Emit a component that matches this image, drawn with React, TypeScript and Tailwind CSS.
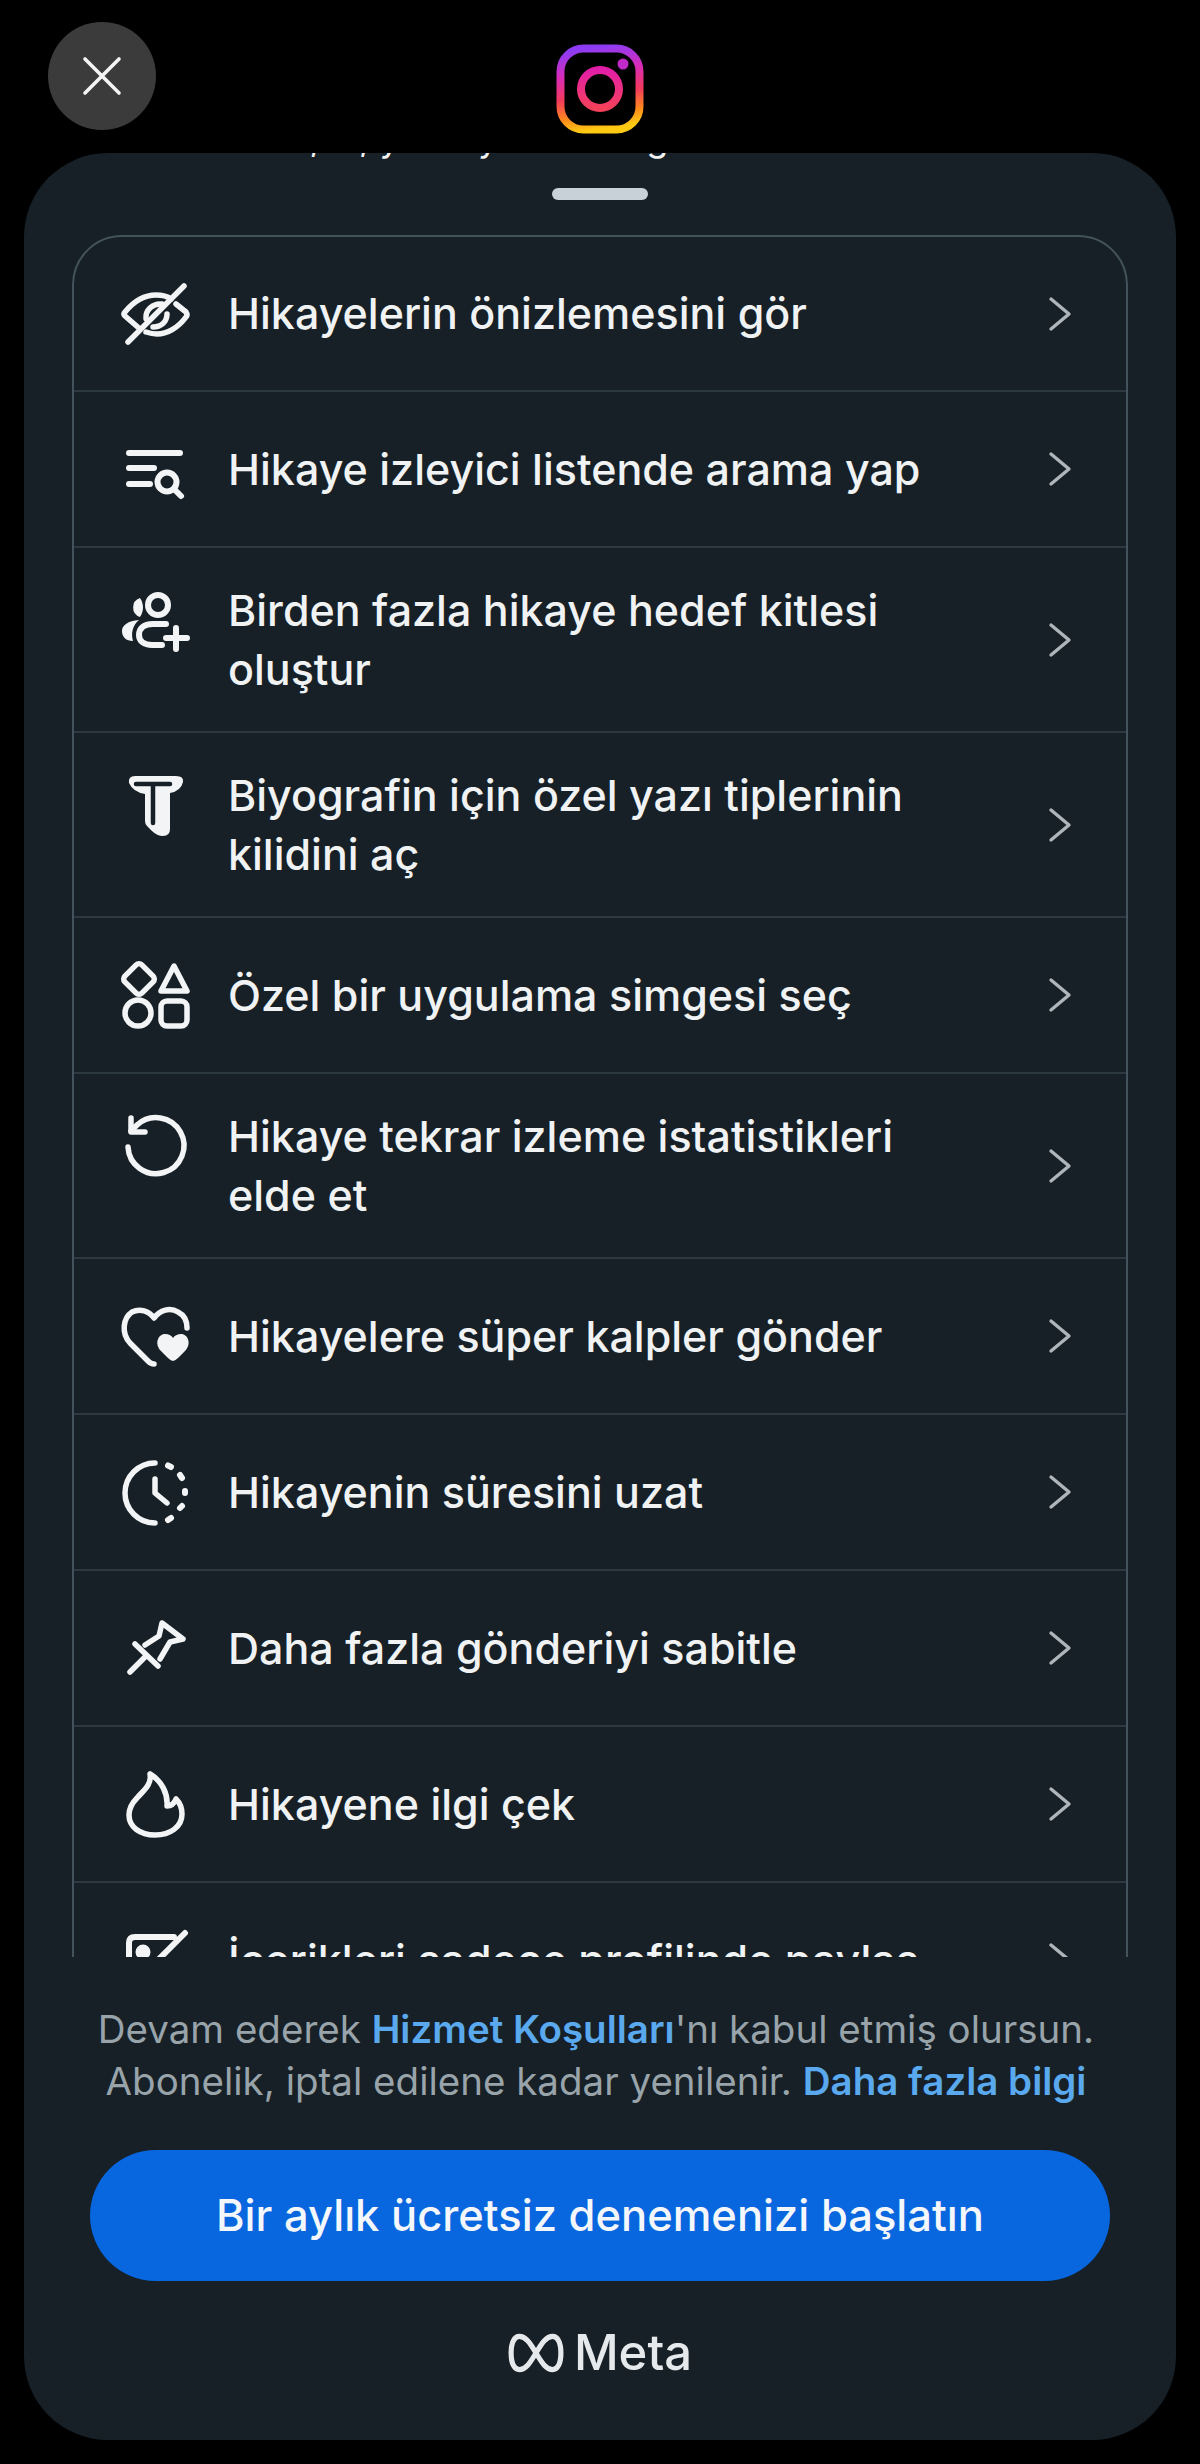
import React from "react";

// Icons are all drawn in a 72x72 box, measured off the reference
const s = {
  fill: "none",
  stroke: "#f2f4f5",
  strokeWidth: 5.5,
  strokeLinecap: "round" as const,
  strokeLinejoin: "round" as const,
};

function Box({ children }: { children: React.ReactNode }) {
  return (
    <svg viewBox="0 0 72 72" className="w-[72px] h-[72px] shrink-0">
      {children}
    </svg>
  );
}

const EyeIcon = () => (
  <Box>
    <g {...s}>
      <path d="M20 51 L5 38 Q3 36 5 34 C14 23 25 17 36 17 C42 17 47 18 51 21" />
      <path d="M56 26 L66 34 Q68 37 66 39 C58 50 47 56 37 56 C33 56 29 55 26 54" />
      <path d="M26 41 C25 32 33 25 42 26" />
      <path d="M47 36 C47 44 41 49 33 49" />
      <path d="M8 64 L64 8" />
    </g>
  </Box>
);

const ListSearchIcon = () => (
  <Box>
    <g {...s} strokeWidth={6}>
      <path d="M9 20 H60" />
      <path d="M9 35 H34" />
      <path d="M9 51 H30" />
      <circle cx="47" cy="49" r="9.5" />
      <path d="M55 57 L61 63" />
    </g>
  </Box>
);

const GroupAddIcon = () => (
  <Box>
    <g {...s} strokeWidth={6}>
      <circle cx="38" cy="22" r="10" />
      <path d="M46 41 H33 C23 41 19 46 19 52 C19 58 24 62 32 62 H42" />
      <path d="M56 45 V66 M46 55 H67" />
    </g>
    <path d="M20 15 A10 10 0 0 0 20 34 C24 28 24 21 20 15 Z" fill="#f2f4f5" />
    <path d="M19 37 C8 38 2 42 2 48 C2 54 6 58 13 58 C11 51 12 43 19 37 Z" fill="#f2f4f5" />
  </Box>
);

const FontIcon = () => (
  <Box>
    <path
      d="M15 8 H56 Q64 8 63 14 Q61 23 50 25 V61 Q50 68 43 68 Q37 68 32 63 L27 58 Q25 56 25 53 V26 Q13 24 9 15 Q8 8 15 8 Z"
      fill="#f2f4f5"
    />
    <path d="M16 16 H50 M33 16 V55" fill="none" stroke="#162026" strokeWidth={4.5} strokeLinecap="round" />
  </Box>
);

const ShapesIcon = () => (
  <Box>
    <g {...s}>
      <rect x="7" y="8" width="24" height="24" rx="4" transform="rotate(45 19 20)" />
      <path d="M54 7 L67 32 H41 Z" />
      <circle cx="18" cy="54" r="13" />
      <rect x="41" y="42" width="26" height="25" rx="6" />
    </g>
  </Box>
);

const ReplayIcon = () => (
  <Box>
    <g {...s}>
      <path d="M8 38 A28 28 0 1 0 17 16 L11 22" />
      <path d="M11 9 V23 H25" />
    </g>
  </Box>
);

const HeartsIcon = () => (
  <Box>
    <g {...s}>
      <path d="M34 64 Q31 64 28 61 L10 43 C1 33 3 18 12 12 C20 8 29 11 34 18 C40 10 50 7 58 12 C64 15 67 21 67 28" />
    </g>
    <path
      d="M53 61 Q51 61 48 58 L41 51 C34 44 38 34 45 34 C49 34 52 36 53 38 C55 35 58 34 61 34 C68 34 72 44 65 51 L58 58 Q55 61 53 61 Z"
      fill="#f2f4f5"
    />
  </Box>
);

const ClockIcon = () => (
  <Box>
    <g {...s}>
      <path d="M35 7 A30 30 0 0 0 35 67" />
      <path d="M35 23 V37 L47 47" />
      <path d="M48 9.5 L51 11 M60 19 L62 22 M65 35 V37 M60 52 L62 50 M48 64 L51 62" strokeWidth={6} />
    </g>
  </Box>
);

const PinIcon = () => (
  <Box>
    <g {...s}>
      <path d="M25 33 L39 24 L42 11 L63 27 L50 30 L40 47" />
      <path d="M15 32 L38 54" />
      <path d="M10 60 L26 44" />
    </g>
  </Box>
);

const FlameIcon = () => (
  <Box>
    <g {...s}>
      <path d="M30 6 C32 16 24 22 17 30 C11 36 9 41 9 47 C9 59 20 67 35 67 C50 67 62 59 62 46 C62 40 60 35 56 31 C54 36 51 38 47 38 C48 26 42 13 30 6 Z" />
    </g>
  </Box>
);

const ProfileIcon = () => (
  <Box>
    <g {...s} strokeWidth={6}>
      <path d="M54 13 H15 Q9 13 9 19 V60 Q9 66 15 66 H54 Q60 66 60 60 V36" />
      <circle cx="23" cy="28" r="4.5" fill="#f2f4f5" />
      <path d="M32 42 L65 9" />
    </g>
  </Box>
);

const Chevron = () => (
  <svg viewBox="0 0 24 36" className="w-[24px] h-[36px] shrink-0">
    <path d="M3 3 L21 18 L3 33" fill="none" stroke="#aeb6bc" strokeWidth={3.4} strokeLinecap="round" strokeLinejoin="round" />
  </svg>
);

const InstagramLogo = () => (
  <svg viewBox="0 0 88 90" className="w-[88px] h-[90px]">
    <defs>
      <linearGradient id="igFrame" x1="0.35" y1="0" x2="0.5" y2="1">
        <stop offset="0" stopColor="#8d3cf4" />
        <stop offset="0.3" stopColor="#d92bb8" />
        <stop offset="0.58" stopColor="#f23a5c" />
        <stop offset="0.82" stopColor="#ff8a1c" />
        <stop offset="1" stopColor="#ffcb12" />
      </linearGradient>
      <linearGradient id="igRing" x1="0.5" y1="0" x2="0.5" y2="1">
        <stop offset="0" stopColor="#e31fa8" />
        <stop offset="1" stopColor="#f5405a" />
      </linearGradient>
    </defs>
    <rect x="4.5" y="4.5" width="79" height="81" rx="23" fill="none" stroke="url(#igFrame)" strokeWidth={8} />
    <circle cx="44" cy="45" r="19" fill="none" stroke="url(#igRing)" strokeWidth={8} />
    <circle cx="67" cy="20" r="5.5" fill="#c02bc8" />
  </svg>
);

const rows = [
  { label: "Hikayelerin önizlemesini gör", icon: EyeIcon, h: "h-[155px]" },
  { label: "Hikaye izleyici listende arama yap", icon: ListSearchIcon, h: "h-[156px]" },
  { label: "Birden fazla hikaye hedef kitlesi oluştur", icon: GroupAddIcon, h: "h-[185px]", two: true },
  { label: "Biyografin için özel yazı tiplerinin kilidini aç", icon: FontIcon, h: "h-[185px]", two: true },
  { label: "Özel bir uygulama simgesi seç", icon: ShapesIcon, h: "h-[156px]" },
  { label: "Hikaye tekrar izleme istatistikleri elde et", icon: ReplayIcon, h: "h-[185px]", two: true },
  { label: "Hikayelere süper kalpler gönder", icon: HeartsIcon, h: "h-[156px]" },
  { label: "Hikayenin süresini uzat", icon: ClockIcon, h: "h-[156px]" },
  { label: "Daha fazla gönderiyi sabitle", icon: PinIcon, h: "h-[156px]" },
  { label: "Hikayene ilgi çek", icon: FlameIcon, h: "h-[156px]" },
  { label: "İçerikleri sadece profilinde paylaş", icon: ProfileIcon, h: "h-[156px]" },
];

export default function App() {
  return (
    <div className="w-[1200px] h-[2464px] bg-black font-[Inter,sans-serif] overflow-hidden">
      <div className="relative z-10 bg-black h-[153px] grid grid-cols-[108px_1fr_108px] px-[48px] pt-[22px]">
        <button className="w-[108px] h-[108px] rounded-full bg-[#3b3b3b] flex items-center justify-center">
          <svg viewBox="0 0 40 40" className="w-[40px] h-[40px]">
            <path d="M3 3 L37 37 M37 3 L3 37" stroke="#f4f4f4" strokeWidth={3.6} strokeLinecap="round" />
          </svg>
        </button>
        <div className="flex justify-center pt-[22px]">
          <InstagramLogo />
        </div>
        <div />
      </div>

      {/* Sheet */}
      <div className="w-[1152px] h-[2287px] mx-[24px] bg-[#162026] rounded-[84px] overflow-hidden flex flex-col">
        {/* bottom edge of the scrolled away text */}
        <div className="h-[8px] shrink-0 overflow-hidden pl-[151px]">
          <div className="text-[36px] leading-[44px] -mt-[37px] whitespace-nowrap text-[#f0f2f4] h-[44px]">
            Rozetini, al, yıldız yorum ve gelir
          </div>
        </div>

        {/* Handle */}
        <div className="shrink-0 flex justify-center pt-[27px] pb-[35px]">
          <div className="w-[96px] h-[12px] rounded-full bg-[#c9d1d8]" />
        </div>

        {/* Feature list */}
        <div className="h-[1722px] shrink-0 overflow-hidden px-[48px]">
          <div className="border-2 border-[#43525b] rounded-[50px] overflow-hidden">
            {rows.map(({ label, icon: Icon, h, two }) => (
              <div key={label} className={`${h} border-b-2 border-[#2c3941] flex items-center pl-[46px] pr-[54px]`}>
                <div className={two ? "self-start mt-[35px]" : ""}>
                  <Icon />
                </div>
                <div className="ml-[36px] w-[720px] text-[43px] leading-[59px] font-medium text-[#f0f2f4]">{label}</div>
                <div className="ml-auto">
                  <Chevron />
                </div>
              </div>
            ))}
          </div>
        </div>

        {/* Footer */}
        <div className="flex-1 flex flex-col items-center">
          <p className="mt-[46px] -ml-[8px] text-[38.5px] leading-[52px] text-center text-[#98a3aa] whitespace-nowrap">
            Devam ederek <span className="font-semibold text-[#5aa9ee]">Hizmet Koşulları</span>'nı kabul etmiş olursun.
            <br />
            Abonelik, iptal edilene kadar yenilenir. <span className="font-semibold text-[#5aa9ee]">Daha fazla bilgi</span>
          </p>
          <button className="mt-[43px] w-[1020px] h-[131px] rounded-full bg-[#0866df] text-[43.5px] font-medium text-[#f4f7fb]">
            Bir aylık ücretsiz denemenizi başlatın
          </button>
          <div className="mt-[50px] flex items-center gap-[10px]">
            <svg viewBox="0 0 54 38" className="w-[56px] h-[40px]">
              <path
                d="M27 19 C21 9 17 3 11 3 C6 3 3 9 3 19 C3 29 6 35 11 35 C17 35 21 29 27 19 C33 9 37 3 43 3 C48 3 51 9 51 19 C51 29 48 35 43 35 C37 35 33 29 27 19 Z"
                fill="none"
                stroke="#e6e9eb"
                strokeWidth={5}
              />
            </svg>
            <span className="text-[49px] leading-[44px] font-medium text-[#e6e9eb]">Meta</span>
          </div>
        </div>
      </div>
    </div>
  );
}
